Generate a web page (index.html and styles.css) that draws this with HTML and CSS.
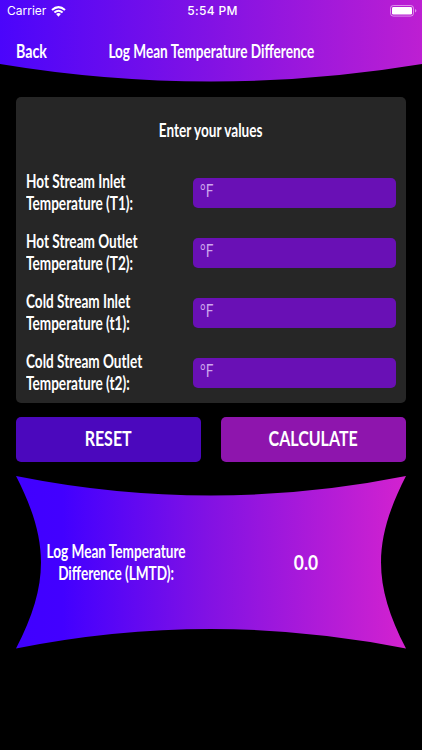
FILE: index.html
```html
<!DOCTYPE html>
<html lang="en">
<head>
  <meta charset="UTF-8" />
  <meta name="viewport" content="width=device-width, initial-scale=1.0"/>
  <title>Log Mean Temperature Difference</title>
  <link rel="stylesheet" href="styles.css">
</head>
<body>
  <header class="header">
    <svg class="shape" viewBox="0 0 422 82" aria-hidden="true">
      <defs>
        <linearGradient id="header-fill">
          <stop offset="0" stop-color="#4b05fb"/>
          <stop offset="0.5" stop-color="#8212e4"/>
          <stop offset="1" stop-color="#bd1fd2"/>
        </linearGradient>
      </defs>
      <path d="M0 0H422V64Q211 99 0 64Z" fill="url(#header-fill)"/>
    </svg>
    <div class="status">
      <div class="carrier">
        <span>Carrier</span>
        <svg width="15" height="11" viewBox="0 0 15 11" fill="none" stroke="#fff" stroke-width="2">
          <path d="M1 4.1Q7.5 -1.9 14 4.1"/>
          <path d="M3.4 6.6Q7.5 2.9 11.6 6.6"/>
          <path d="M5.1 8.1Q7.5 6.1 9.9 8.1L7.5 10.7Z" fill="#fff" stroke="none"/>
        </svg>
      </div>
      <span class="clock">5:54 PM</span>
      <svg class="battery" width="27" height="12" viewBox="0 0 27 12">
        <rect x="0.5" y="0.5" width="23" height="10.6" rx="2.8" fill="none" stroke="#fff" stroke-opacity="0.5"/>
        <rect x="2" y="2" width="20" height="7.6" rx="1.4" fill="#fff"/>
        <path d="M25 4Q26.4 4.5 26.4 5.8Q26.4 7.1 25 7.6Z" fill="#fff" fill-opacity="0.5"/>
      </svg>
    </div>
    <div class="nav">
      <a class="back"><span class="narrow">Back</span></a>
      <h1 class="title"><span class="narrow">Log Mean Temperature Difference</span></h1>
    </div>
  </header>

  <main class="content">
    <section class="panel">
      <h2 class="prompt"><span class="narrow">Enter your values</span></h2>
      <div class="row">
        <label class="narrow" for="hot-in">Hot Stream Inlet<br>Temperature (T1):</label>
        <div class="field" id="hot-in"><span class="narrow">°F</span></div>
      </div>
      <div class="row">
        <label class="narrow" for="hot-out">Hot Stream Outlet<br>Temperature (T2):</label>
        <div class="field" id="hot-out"><span class="narrow">°F</span></div>
      </div>
      <div class="row">
        <label class="narrow" for="cold-in">Cold Stream Inlet<br>Temperature (t1):</label>
        <div class="field" id="cold-in"><span class="narrow">°F</span></div>
      </div>
      <div class="row">
        <label class="narrow" for="cold-out">Cold Stream Outlet<br>Temperature (t2):</label>
        <div class="field" id="cold-out"><span class="narrow">°F</span></div>
      </div>
    </section>

    <div class="buttons">
      <button class="reset"><span class="narrow">RESET</span></button>
      <button class="calculate"><span class="narrow">CALCULATE</span></button>
    </div>

    <section class="result">
      <svg class="shape" viewBox="0 0 390 173" aria-hidden="true">
        <defs>
          <linearGradient id="result-fill">
            <stop offset="0" stop-color="#4000ff"/>
            <stop offset="0.12" stop-color="#4200ff"/>
            <stop offset="0.5" stop-color="#8312e3"/>
            <stop offset="1" stop-color="#d322cf"/>
          </linearGradient>
        </defs>
        <path d="M0 0Q195 39 390 0C356.700 65 356.700 108 390 172.500Q195 133.500 0 172.500C33.300 108 33.300 65 0 0Z" fill="url(#result-fill)"/>
      </svg>
      <p class="result-label"><span class="narrow">Log Mean Temperature<br>Difference (LMTD):</span></p>
      <p class="result-value"><span class="narrow">0.0</span></p>
    </section>
  </main>
</body>
</html>
```
FILE: styles.css
```css
* {
  box-sizing: border-box;
  margin: 0;
  padding: 0;
}

body {
  background-color: #000;
  color: #fff;
  font-family: Lato, sans-serif;
  font-size: 18px;
  font-weight: 700;
  line-height: 22.5px;
  min-height: 100vh;
  overflow: hidden;
}

h1, h2 {
  font-size: inherit;
  font-weight: inherit;
}

/* condensed lettering */
.narrow {
  display: inline-block;
  white-space: nowrap;
  transform: scaleX(0.755);
}

.header {
  position: relative;
  height: 82px;
}

.shape {
  position: absolute;
  top: 0;
  left: 0;
  width: 100%;
  height: 100%;
  z-index: -1;
}

.status {
  display: grid;
  grid-template-columns: 1fr auto 1fr;
  align-items: center;
  height: 22px;
  padding: 0 5px 0 7px;
  font-family: Inter, sans-serif;
  font-size: 12px;
  font-weight: 400;
}

.carrier {
  display: flex;
  align-items: center;
  gap: 5px;
}

.clock {
  padding-left: 1px;
  font-weight: 500;
  letter-spacing: 0.3px;
}

.battery {
  justify-self: end;
}

.nav {
  display: grid;
  grid-template-columns: 76px minmax(0, 1fr) 76px;
  align-items: center;
  height: 58px;
  padding: 0 16px;
}

.back .narrow {
  transform: scaleX(0.79);
  transform-origin: left;
}

.title {
  display: flex;
  justify-content: center;
}

.content {
  padding: 15px 16px 0;
}

.panel {
  height: 306px;
  padding: 21.500px 10px 0;
  border-radius: 5px;
  background-color: #262626;
}

.prompt {
  display: flex;
  justify-content: center;
  height: 44px;
}

.row {
  display: grid;
  grid-template-columns: 167px 1fr;
  align-items: center;
  height: 59.9px;
}

.row .narrow {
  transform-origin: left;
  justify-self: start;
}

.field {
  height: 30px;
  margin-top: 1.500px;
  padding: 1px 7px;
  border-radius: 5px;
  background-color: #6910b5;
  color: #cda5ed;
  font-weight: 400;
}

.buttons {
  display: grid;
  grid-template-columns: 1fr 1fr;
  gap: 20px;
  margin-top: 13.500px;
}

.buttons button {
  height: 45.500px;
  padding-bottom: 2px;
  border: none;
  border-radius: 5px;
  color: #fff;
  font: inherit;
  font-size: 20.5px;
}

.buttons .narrow {
  transform: scaleX(0.78);
}

.reset {
  background-color: #4b08bd;
}

.calculate {
  background-color: #8e15ad;
}

.result {
  position: relative;
  display: grid;
  grid-template-columns: 200px 180px;
  align-items: center;
  height: 173px;
  margin-top: 14px;
  padding-bottom: 1px;
  text-align: center;
}

.result-label {
  display: flex;
  justify-content: center;
}

.result-value {
  font-size: 20px;
}

.result-value .narrow {
  transform: scaleX(0.87);
}
```
